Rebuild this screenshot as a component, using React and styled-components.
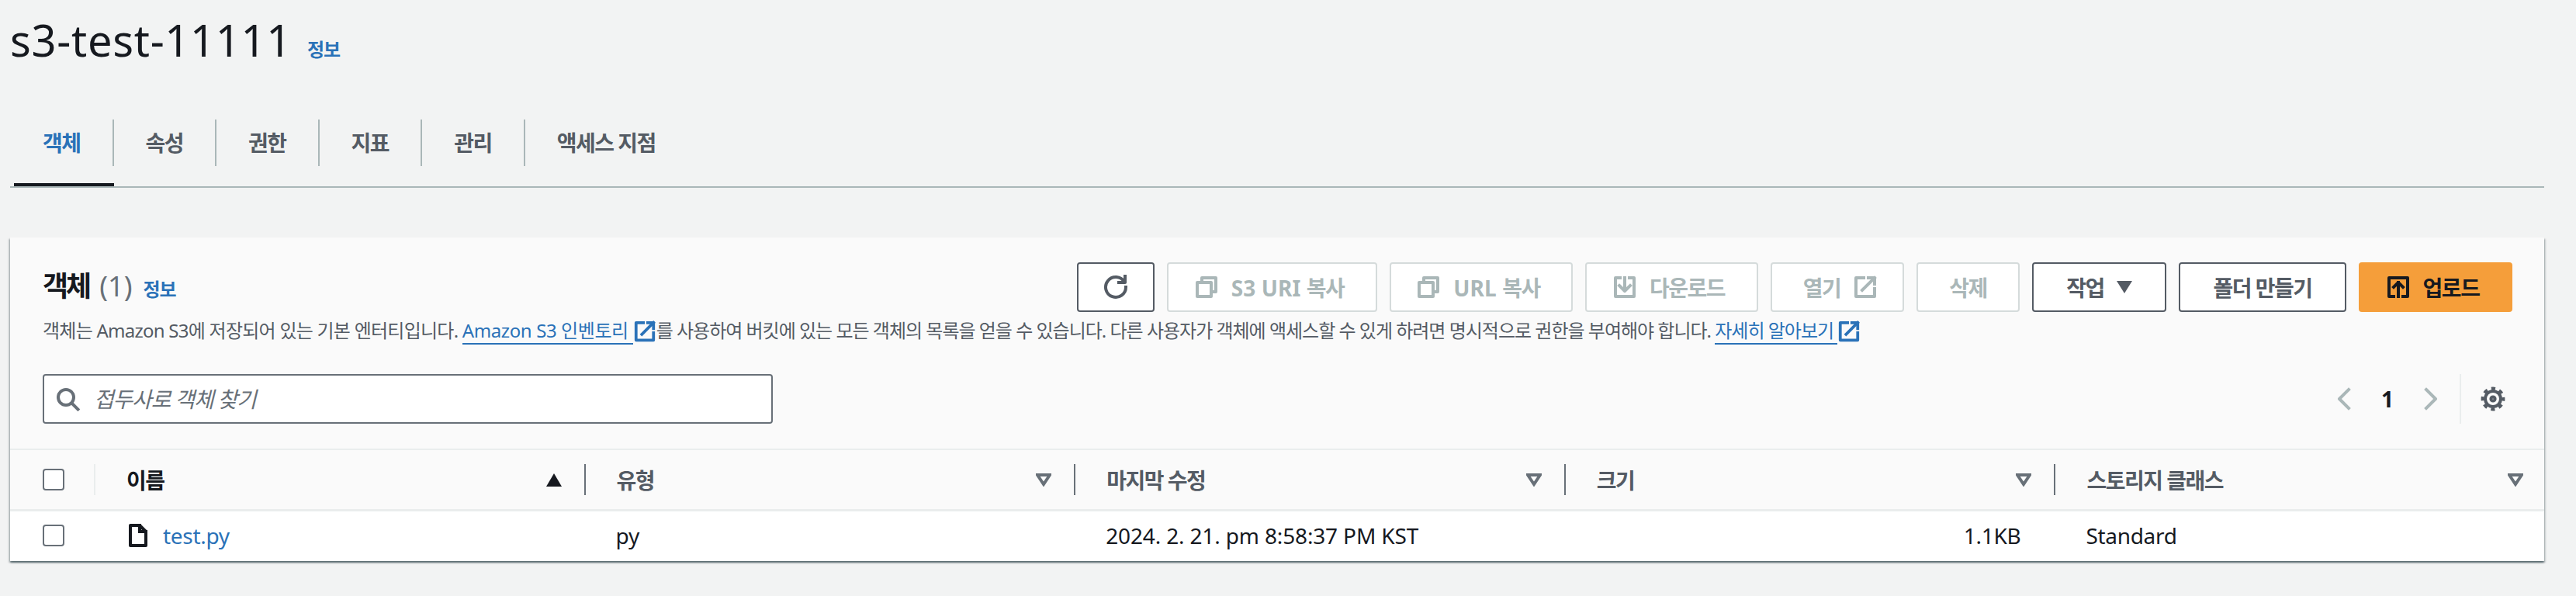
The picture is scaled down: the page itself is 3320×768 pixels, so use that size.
import React from 'react';
import styled, { createGlobalStyle } from 'styled-components';

const FONT = '"Noto Sans", "Noto Sans CJK KR", sans-serif';
const LINK = '#2a72b8';
const TEXT = '#16191f';
const GRAY = '#545b64';
const DISABLED = '#aab7b8';

const GlobalStyle = createGlobalStyle`
  html, body {
    margin: 0;
    background: #f2f3f3;
    font-family: ${FONT};
    color: ${TEXT};
  }
`;

const Icon = ({ size = 32, children, color }) => (
  <IconSvg width={size} height={size} viewBox="0 0 16 16" $color={color}>
    {children}
  </IconSvg>
);

const CopyIcon = () => (
  <Icon>
    <path d="M2 5h9v9H2z" />
    <path d="M5 5V2h9v9h-3" />
  </Icon>
);
const DownloadIcon = () => (
  <Icon>
    <path d="M11 2h3v12H2V2h3" />
    <path d="m4.5 7 3.5 3.5L11.500 7" />
    <path d="M8 2v8" />
  </Icon>
);
const ExternalIcon = ({ color, size }) => (
  <Icon color={color} size={size}>
    <path d="M10 2h4v4" />
    <path d="m6 10 8-8" />
    <path d="M14 9.050V14H2V2h5" />
  </Icon>
);
const UploadIcon = () => (
  <Icon color={TEXT}>
    <path d="M5 14H2V2h12v12h-3" />
    <path d="m5 8 3-3 3 3" />
    <path d="M8 14V5" />
  </Icon>
);
const RefreshIcon = () => (
  <Icon color={GRAY}>
    <path d="M10 5h4V1" />
    <path d="M14.500 8a6.500 6.500 0 1 1-.9-3.300" />
  </Icon>
);
const SearchIcon = () => (
  <Icon color="#687078">
    <circle cx="7" cy="7" r="5" />
    <path d="m10.700 10.700 4 4" />
  </Icon>
);
const ChevronLeft = () => (
  <Icon color={DISABLED}>
    <path d="M11 2 5 8l6 6" />
  </Icon>
);
const ChevronRight = () => (
  <Icon color={DISABLED}>
    <path d="m5 2 6 6-6 6" />
  </Icon>
);
const GearIcon = () => (
  <Icon color={GRAY}>
    <circle cx="8" cy="8" r="5" />
    <circle cx="8" cy="8" r="1.300" />
    <circle cx="8" cy="8" r="6.700" strokeDasharray="2.600 2.663" strokeDashoffset="1.300" strokeLinecap="butt" />
  </Icon>
);
const FileIcon = () => (
  <Icon color={TEXT}>
    <path d="M9 1.500v4h4" strokeLinejoin="miter" />
    <path d="M3 1.500h6l4 4V14.500H3z" />
  </Icon>
);

const Caret = ({ color }) => (
  <svg width="20" height="16" viewBox="0 0 20 16">
    <path d="M0 0h20L10 16z" fill={color} />
  </svg>
);
const SortUp = () => (
  <svg width="20" height="17" viewBox="0 0 20 17">
    <path d="M10 0 20 17H0z" fill={TEXT} />
  </svg>
);
const SortNone = () => (
  <svg width="20" height="17" viewBox="0 0 20 17">
    <path d="M2 2h16L10 14z" fill="#fff" stroke="#687078" strokeWidth="4" />
  </svg>
);

const tabs = ['객체', '속성', '권한', '지표', '관리', '액세스 지점'];

const columns = [
  { label: '이름', active: true, soft: true },
  { label: '유형' },
  { label: '마지막 수정' },
  { label: '크기' },
  { label: '스토리지 클래스', last: true },
];

const App = () => {
  return (
    <Page>
      <GlobalStyle />
      <TitleRow>
        <Title>s3-test-11111</Title>
        <InfoLink>정보</InfoLink>
      </TitleRow>

      <TabBar>
        {tabs.map((tab, i) => (
          <Tab key={tab} $active={i === 0}>
            <TabLabel $active={i === 0} $first={i === 0} $last={i === tabs.length - 1}>
              {tab}
            </TabLabel>
          </Tab>
        ))}
      </TabBar>

      <Panel>
        <PanelHead>
          <HeadRow>
            <Heading>
              <HeadingText>객체</HeadingText>
              <Counter>(1)</Counter>
              <InfoLink>정보</InfoLink>
            </Heading>
            <Actions>
              <Button $width={100}>
                <RefreshIcon />
              </Button>
              <Button disabled $width={271} $icon="left">
                <CopyIcon />
                <Wide>
                  S3 URI <span>복사</span>
                </Wide>
              </Button>
              <Button disabled $width={236} $icon="left">
                <CopyIcon />
                <Wide>
                  URL <span>복사</span>
                </Wide>
              </Button>
              <Button disabled $width={223} $icon="left">
                <DownloadIcon />
                다운로드
              </Button>
              <Button disabled $width={172} $icon="right">
                열기
                <ExternalIcon />
              </Button>
              <Button disabled $width={133}>
                삭제
              </Button>
              <Button $width={173}>
                작업
                <Caret color={GRAY} />
              </Button>
              <Button $width={216}>폴더 만들기</Button>
              <PrimaryButton $width={198} $icon="left">
                <UploadIcon />
                업로드
              </PrimaryButton>
            </Actions>
          </HeadRow>
          <Description>
            객체는 Amazon S3에 저장되어 있는 기본 엔터티입니다. <FirstLink>Amazon S3 인벤토리 </FirstLink>
            <ExternalIcon color={LINK} size={30} />
            <Rest>
              를 사용하여 버킷에 있는 모든 객체의 목록을 얻을 수 있습니다. 다른 사용자가 객체에 액세스할 수 있게
              하려면 명시적으로 권한을 부여해야 합니다. <DocLink>자세히 알아보기 </DocLink>
            </Rest>
            <ExternalIcon color={LINK} size={30} />
          </Description>
          <SearchRow>
            <SearchBox>
              <SearchIcon />
              <SearchInput placeholder="접두사로 객체 찾기" readOnly />
            </SearchBox>
            <Pager>
              <ChevronLeft />
              <PageNumber>1</PageNumber>
              <ChevronRight />
              <PagerDivider />
              <GearIcon />
            </Pager>
          </SearchRow>
        </PanelHead>

        <TableHead>
          <CheckCell>
            <Checkbox />
          </CheckCell>
          {columns.map((col) => (
            <HeadCell key={col.label} $soft={col.soft} $last={col.last}>
              <HeadLabel $active={col.active}>{col.label}</HeadLabel>
              {col.active ? <SortUp /> : <SortNone />}
            </HeadCell>
          ))}
        </TableHead>

        <TableRow>
          <CheckCell>
            <Checkbox />
          </CheckCell>
          <NameCell>
            <FileIcon />
            <FileLink>test.py</FileLink>
          </NameCell>
          <Cell>py</Cell>
          <DateCell>2024. 2. 21. pm 8:58:37 PM KST</DateCell>
          <SizeCell>1.1KB</SizeCell>
          <Cell>Standard</Cell>
        </TableRow>
      </Panel>
    </Page>
  );
};

const IconSvg = styled.svg`
  flex: none;
  fill: none;
  stroke: ${({ $color }) => $color || 'currentColor'};
  stroke-width: 2;
  stroke-linejoin: round;
  stroke-linecap: square;
  vertical-align: -7px;
`;

const Page = styled.div`
  width: 3320px;
  height: 768px;
  box-sizing: border-box;
  padding: 0 41px 0 13px;
  overflow: hidden;
`;

const TitleRow = styled.div`
  display: flex;
  align-items: baseline;
  gap: 20px;
  height: 154px;
  padding-top: 13px;
  box-sizing: border-box;
`;

const Title = styled.h1`
  margin: 0;
  font-size: 56px;
  line-height: 76px;
  font-weight: 400;
  letter-spacing: 0.7px;
  color: ${TEXT};
`;

const InfoLink = styled.span`
  font-size: 24px;
  font-weight: 700;
  letter-spacing: -1px;
  color: ${LINK};
`;

const TabBar = styled.div`
  display: flex;
  padding-left: 5px;
  border-bottom: 2px solid ${DISABLED};
  margin-bottom: 64px;
`;

const Tab = styled.div`
  height: 86px;
  box-sizing: border-box;
  border-bottom: 4px solid ${({ $active }) => ($active ? TEXT : 'transparent')};
`;

const TabLabel = styled.div`
  height: 60px;
  box-sizing: border-box;
  padding: 0 41px 2px ${({ $first }) => ($first ? '37px' : '41px')};
  display: flex;
  align-items: center;
  font-size: 28px;
  font-weight: 700;
  letter-spacing: -1.5px;
  color: ${({ $active }) => ($active ? LINK : GRAY)};
  border-right: 2px solid ${({ $last }) => ($last ? 'transparent' : DISABLED)};
`;

const Panel = styled.section`
  background: #fff;
  box-shadow: 0 2px 2px 0 rgba(0, 28, 36, 0.5), 2px 2px 2px 0 rgba(0, 28, 36, 0.15),
    -2px 2px 2px 0 rgba(0, 28, 36, 0.15);
`;

const PanelHead = styled.div`
  background: #fafafa;
  padding: 32px 41px 32px 42px;
`;

const HeadRow = styled.div`
  display: flex;
  align-items: flex-start;
  justify-content: space-between;
`;

const Heading = styled.div`
  display: flex;
  align-items: baseline;
  gap: 14px;
  padding-top: 6px;
`;

const HeadingText = styled.h2`
  margin: 0;
  font-size: 36px;
  line-height: 50px;
  font-weight: 700;
  letter-spacing: -3px;
`;

const Counter = styled.span`
  margin-left: -1px;
  font-size: 36px;
  color: #687078;
`;

const Actions = styled.div`
  display: flex;
  gap: 16px;
`;

const Button = styled.button`
  width: ${({ $width }) => $width}px;
  height: 64px;
  box-sizing: border-box;
  padding: 0 ${({ $icon }) => ($icon === 'left' ? '8px' : '0')} 0 ${({ $icon }) => ($icon === 'right' ? '8px' : '0')};
  display: flex;
  align-items: center;
  justify-content: center;
  gap: 16px;
  font-family: ${FONT};
  font-size: 28px;
  font-weight: 700;
  letter-spacing: -1.5px;
  background: #fff;
  border-radius: 4px;
  border: 2px solid ${({ disabled }) => (disabled ? '#d5dbdb' : GRAY)};
  color: ${({ disabled }) => (disabled ? DISABLED : GRAY)};
`;

const Wide = styled.span`
  letter-spacing: 0.1px;
  span {
    letter-spacing: -1.5px;
  }
`;

const PrimaryButton = styled(Button)`
  background: #f59e3a;
  border-color: #f59e3a;
  color: ${TEXT};
`;

const Description = styled.p`
  margin: 6px 0 0;
  height: 38px;
  font-size: 24px;
  line-height: 36px;
  letter-spacing: -0.75px;
  color: ${GRAY};
  white-space: nowrap;
`;

const Rest = styled.span`
  letter-spacing: -1px;
`;

const DocLink = styled.span`
  color: ${LINK};
  border-bottom: 2px solid ${LINK};
  white-space: pre;
`;

const FirstLink = styled(DocLink)`
  letter-spacing: -0.4px;
`;

const SearchRow = styled.div`
  display: flex;
  align-items: center;
  justify-content: space-between;
  margin-top: 36px;
`;

const SearchBox = styled.div`
  width: 941px;
  height: 64px;
  box-sizing: border-box;
  display: flex;
  align-items: center;
  gap: 16px;
  padding-left: 14px;
  background: #fff;
  border: 2px solid #687078;
  border-radius: 4px;
`;

const SearchInput = styled.input`
  flex: 1;
  border: 0;
  outline: 0;
  background: transparent;
  font-family: ${FONT};
  font-size: 28px;
  letter-spacing: -1.2px;
  &::placeholder {
    color: #687078;
    font-style: italic;
    opacity: 1;
  }
`;

const Pager = styled.div`
  display: flex;
  align-items: center;
  padding-right: 9px;
`;

const PageNumber = styled.span`
  width: 80px;
  text-align: center;
  font-size: 28px;
  font-weight: 700;
`;

const PagerDivider = styled.span`
  width: 2px;
  height: 64px;
  margin: 0 25px 0 21px;
  background: #eaeded;
`;

const TABLE_COLUMNS = '108px repeat(5, 1fr)';

const TableHead = styled.div`
  display: grid;
  grid-template-columns: ${TABLE_COLUMNS};
  align-items: center;
  height: 81px;
  box-sizing: border-box;
  background: #fafafa;
  border-top: 2px solid #eaeded;
  border-bottom: 3px solid #eaeded;
`;

const TableRow = styled.div`
  display: grid;
  grid-template-columns: ${TABLE_COLUMNS};
  align-items: center;
  height: 64px;
  background: #fff;
  font-size: 28px;
  line-height: 36px;
  letter-spacing: -0.3px;
  padding-bottom: 2px;
  box-sizing: border-box;
`;

const CheckCell = styled.div`
  padding-left: 42px;
  display: flex;
`;

const Checkbox = styled.span`
  width: 28px;
  height: 28px;
  box-sizing: border-box;
  background: #fff;
  border: 2px solid #687078;
  border-radius: 4px;
`;

const HeadCell = styled.div`
  height: 40px;
  box-sizing: border-box;
  padding: 0 ${({ $last }) => ($last ? '27px' : '29px')} 0 40px;
  display: flex;
  align-items: center;
  justify-content: space-between;
  border-left: 2px solid ${({ $soft }) => ($soft ? '#eaeded' : '#687078')};
`;

const HeadLabel = styled.span`
  font-size: 28px;
  font-weight: 700;
  letter-spacing: -1.5px;
  color: ${({ $active }) => ($active ? TEXT : GRAY)};
`;

const Cell = styled.div`
  padding-left: 41px;
`;

const DateCell = styled(Cell)`
  letter-spacing: -0.15px;
`;

const NameCell = styled(Cell)`
  display: flex;
  align-items: center;
  gap: 16px;
`;

const FileLink = styled.span`
  color: ${LINK};
`;

const SizeCell = styled.div`
  padding-right: 43px;
  text-align: right;
`;

export default App;
